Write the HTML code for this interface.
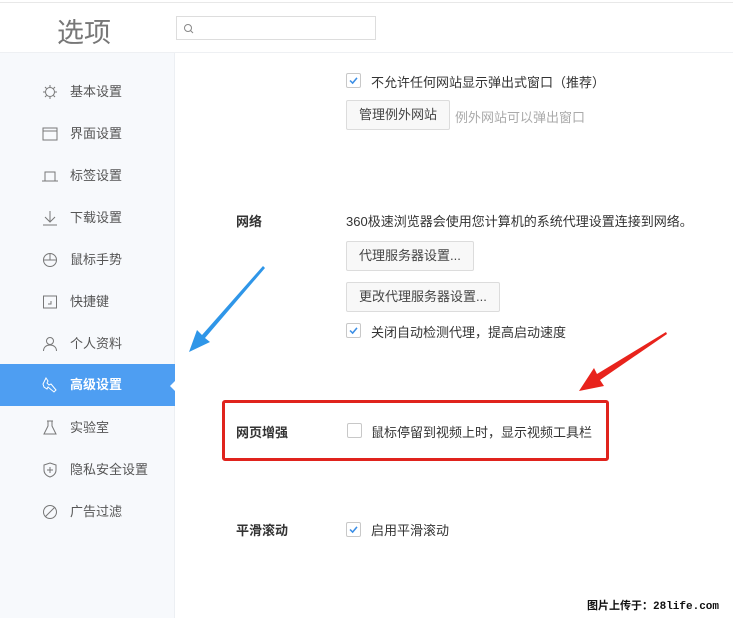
<!DOCTYPE html>
<html><head><meta charset="utf-8"><style>
*{margin:0;padding:0;box-sizing:border-box}
body{width:733px;height:618px;overflow:hidden;background:#fff;position:relative;font-family:"Liberation Sans","Noto Sans CJK SC",sans-serif;font-size:13px;color:#333}
.a{position:absolute;white-space:nowrap}
.hdr{position:absolute;left:0;top:2px;width:733px;height:51px;border-top:1px solid #e8e8e8;border-bottom:1px solid #eef0f3;background:#fff}
.side{position:absolute;left:0;top:53px;width:175px;height:565px;background:#f7f9fc;border-right:1px solid #eceff3}
.it{position:absolute;left:0;width:175px;height:42px;line-height:42px;color:#555}
.it span{position:absolute;left:70px}
.it svg{position:absolute;left:42px;top:13px}
.act{background:#4e9ef2;color:#fff;font-weight:bold}
.cb{position:absolute;width:15px;height:15px;border:1px solid #c8c8c8;border-radius:2px;background:#fff}
.btn{position:absolute;height:30px;line-height:28px;border:1px solid #dcdcdc;background:#f8f8f8;padding:0 12px;color:#444;border-radius:2px}
.lbl{position:absolute;font-weight:bold;color:#333}
</style></head><body>
<div class="hdr"></div>
<div class="a" style="left:57px;top:11px;font-size:27px;color:#777">选项</div>
<div class="a" style="left:176px;top:16px;width:200px;height:24px;border:1px solid #ddd;background:#fff"><svg width="12" height="12" style="position:absolute;left:6px;top:6px" viewBox="0 0 12 12"><circle cx="5" cy="5" r="3.5" fill="none" stroke="#888"/><path d="M7.5 7.5L10 10" stroke="#888"/></svg></div>
<div class="side">
<div class="it" style="top:18px"><svg width="16" height="16" viewBox="0 0 16 16" fill="none" stroke="#777"><circle cx="8" cy="8" r="4.5"/><path d="M8 1v2M8 13v2M1 8h2M13 8h2M3 3l1.5 1.5M13 3l-1.5 1.5M3 13l1.5-1.5M13 13l-1.5-1.5"/></svg><span>基本设置</span></div>
<div class="it" style="top:60px"><svg width="16" height="16" viewBox="0 0 16 16" fill="none" stroke="#777"><rect x="1" y="2" width="14" height="12"/><path d="M1 5h14"/></svg><span>界面设置</span></div>
<div class="it" style="top:102px"><svg width="16" height="16" viewBox="0 0 16 16" fill="none" stroke="#777"><path d="M3 13V4h10v9M0 13h16"/></svg><span>标签设置</span></div>
<div class="it" style="top:144px"><svg width="16" height="16" viewBox="0 0 16 16" fill="none" stroke="#777"><path d="M8 1v11M3 7l5 5 5-5M1 15h14"/></svg><span>下载设置</span></div>
<div class="it" style="top:186px"><svg width="16" height="16" viewBox="0 0 16 16" fill="none" stroke="#777"><circle cx="8" cy="8" r="6.5"/><path d="M1.5 8h13M8 1.5v6.5"/></svg><span>鼠标手势</span></div>
<div class="it" style="top:228px"><svg width="16" height="16" viewBox="0 0 16 16" fill="none" stroke="#777"><rect x="1.5" y="2" width="13" height="12"/><path d="M9 7v3H6"/></svg><span>快捷键</span></div>
<div class="it" style="top:270px"><svg width="16" height="16" viewBox="0 0 16 16" fill="none" stroke="#777"><circle cx="8" cy="5" r="3.5"/><path d="M1.5 15c0-4 3-6 6.5-6s6.5 2 6.5 6"/></svg><span>个人资料</span></div>
<div class="it act" style="top:311px"><svg width="16" height="16" viewBox="0 0 16 16" fill="none" stroke="#fff"><path d="M4 1l2 3-1 2 2 2 2-1 5 6-2 2-6-5-1 2-3-2-1-3 1-2z"/></svg><span>高级设置</span></div>
<div class="it" style="top:354px"><svg width="16" height="16" viewBox="0 0 16 16" fill="none" stroke="#777"><path d="M5 1h6M6 1v5L2 14h12L10 6V1"/></svg><span>实验室</span></div>
<div class="it" style="top:396px"><svg width="16" height="16" viewBox="0 0 16 16" fill="none" stroke="#777"><path d="M8 1l6 2v5c0 4-3 6-6 7-3-1-6-3-6-7V3z"/><path d="M8 5v6M5 8h6"/></svg><span>隐私安全设置</span></div>
<div class="it" style="top:438px"><svg width="16" height="16" viewBox="0 0 16 16" fill="none" stroke="#777"><circle cx="8" cy="8" r="6.5"/><path d="M3.5 12.5l9-9"/></svg><span>广告过滤</span></div>
</div>
<div class="a" style="left:170px;top:379px;width:0;height:0;border-top:7px solid transparent;border-bottom:7px solid transparent;border-right:7px solid #fff"></div>

<svg class="cb" style="left:346px;top:73px" viewBox="0 0 15 15"><path d="M3.5 7.5l3 3 5-6" fill="none" stroke="#3a8ee6" stroke-width="1.8"/></svg>
<div class="a" style="left:371px;top:72px">不允许任何网站显示弹出式窗口（推荐）</div>
<div class="btn" style="left:346px;top:100px">管理例外网站</div>
<div class="a" style="left:455px;top:107px;color:#aaa">例外网站可以弹出窗口</div>

<div class="lbl" style="left:236px;top:211px">网络</div>
<div class="a" style="left:346px;top:211px">360极速浏览器会使用您计算机的系统代理设置连接到网络。</div>
<div class="btn" style="left:346px;top:241px">代理服务器设置...</div>
<div class="btn" style="left:346px;top:282px">更改代理服务器设置...</div>
<svg class="cb" style="left:346px;top:323px" viewBox="0 0 15 15"><path d="M3.5 7.5l3 3 5-6" fill="none" stroke="#3a8ee6" stroke-width="1.8"/></svg>
<div class="a" style="left:371px;top:322px">关闭自动检测代理，提高启动速度</div>

<div class="a" style="left:222px;top:400px;width:387px;height:61px;border:3px solid #e0231d;border-radius:3px"></div>
<div class="lbl" style="left:236px;top:422px">网页增强</div>
<div class="cb" style="left:347px;top:423px"></div>
<div class="a" style="left:371px;top:422px">鼠标停留到视频上时，显示视频工具栏</div>

<div class="lbl" style="left:236px;top:520px">平滑滚动</div>
<svg class="cb" style="left:346px;top:522px" viewBox="0 0 15 15"><path d="M3.5 7.5l3 3 5-6" fill="none" stroke="#3a8ee6" stroke-width="1.8"/></svg>
<div class="a" style="left:371px;top:520px">启用平滑滚动</div>

<svg class="a" style="left:0;top:0" width="733" height="618">
<path d="M263 266L202 335L197 330L189 352L210 342L205 338L265 268Z" fill="#2f96e8"/>
<path d="M666 332L597 374L594 368L579 391L604 386L600 380L667 334Z" fill="#e8231c"/>
</svg>
<div class="a" style="left:587px;top:597px;font-size:11px;font-weight:bold;color:#111;font-family:'Liberation Mono','Noto Sans CJK SC',monospace">图片上传于：28life.com</div>
</body></html>
